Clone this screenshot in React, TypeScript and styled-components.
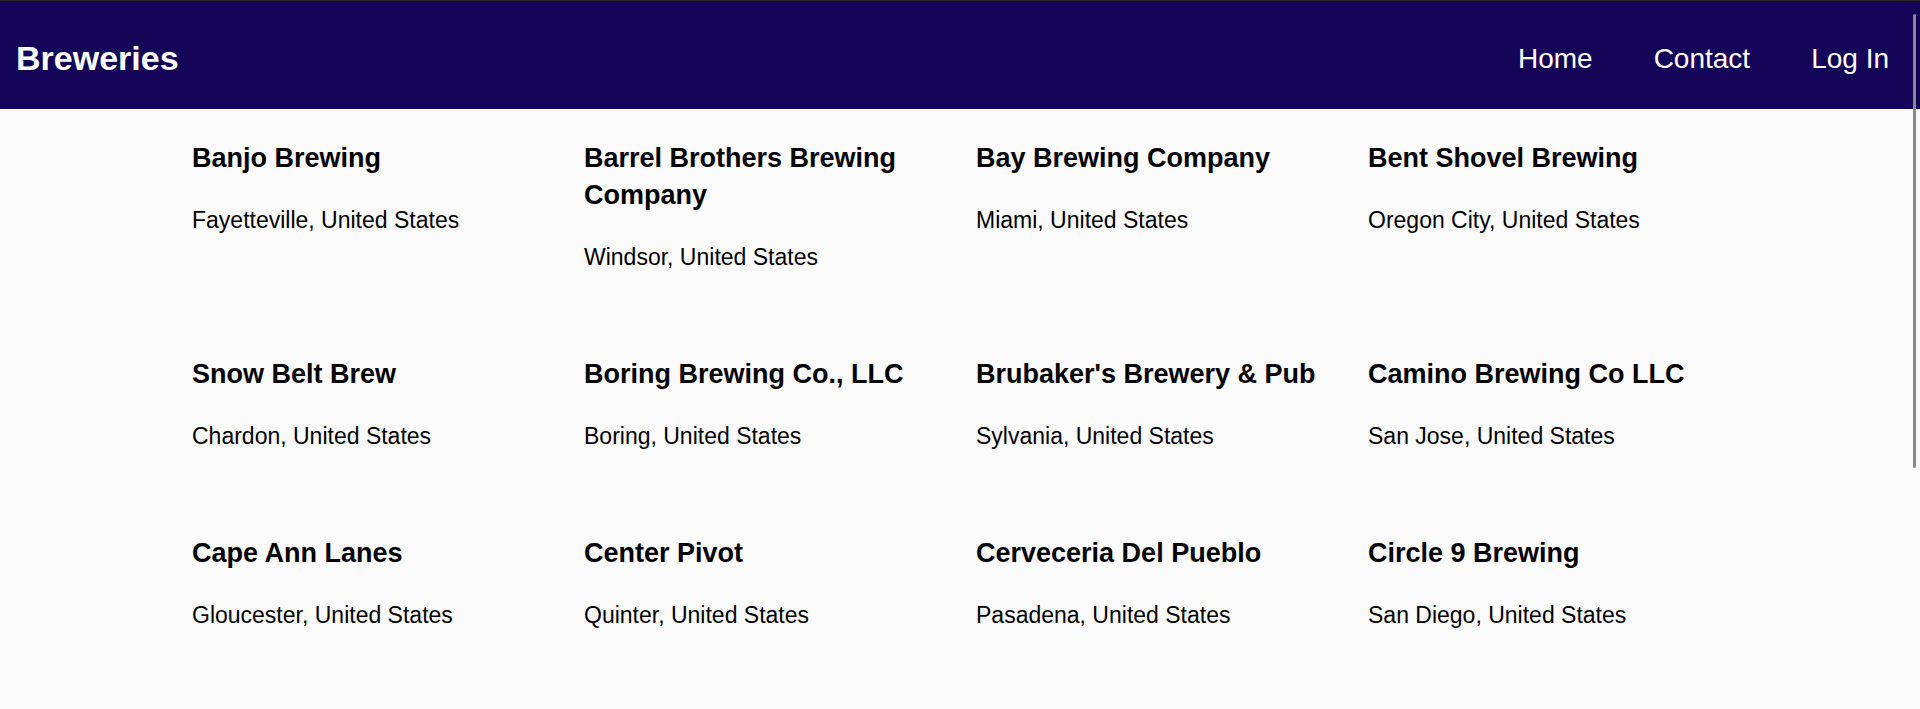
import React from "react";
import styled, { createGlobalStyle } from "styled-components";

const GlobalStyle = createGlobalStyle`
  html, body {
    margin: 0;
    padding: 0;
    background: #fafafa;
    font-family: "Liberation Sans", Arial, sans-serif;
    color: #000;
    overflow: hidden;
  }
  * { box-sizing: border-box; }
`;

const Page = styled.div`
  min-height: 709px;
  border-top: 1px solid #2b2b2b;
  display: flex;
  flex-direction: column;
`;

const Header = styled.header`
  height: 108px;
  background: #140559;
  display: flex;
  align-items: center;
  justify-content: space-between;
  padding: 5px 31px 0 16px;
`;

const Brand = styled.h1`
  margin: 0;
  color: #fff;
  font-size: 34px;
  font-weight: 700;
  line-height: 1;
`;

const Nav = styled.nav`
  display: flex;
  gap: 61px;
  padding-top: 2px;
`;

const NavLink = styled.a`
  color: #fff;
  text-decoration: none;
  font-size: 28px;
  line-height: 1;
`;

const Grid = styled.main`
  display: grid;
  grid-template-columns: repeat(4, 360px);
  column-gap: 32px;
  row-gap: 84px;
  justify-content: center;
  padding-top: 31px;
`;

const Card = styled.article`
  display: flex;
  flex-direction: column;
  gap: 28px;
`;

const Title = styled.h2`
  margin: 0;
  font-size: 27px;
  font-weight: 700;
  line-height: 37px;
`;

const Location = styled.p`
  margin: 0;
  font-size: 23px;
  line-height: 30px;
`;

const ScrollThumb = styled.div`
  position: fixed;
  top: 14px;
  right: 4px;
  width: 3px;
  height: 454px;
  border-radius: 2px;
  background: #8a8a8a;
`;

const breweries = [
  { name: "Banjo Brewing", city: "Fayetteville" },
  { name: "Barrel Brothers Brewing Company", city: "Windsor" },
  { name: "Bay Brewing Company", city: "Miami" },
  { name: "Bent Shovel Brewing", city: "Oregon City" },
  { name: "Snow Belt Brew", city: "Chardon" },
  { name: "Boring Brewing Co., LLC", city: "Boring" },
  { name: "Brubaker's Brewery & Pub", city: "Sylvania" },
  { name: "Camino Brewing Co LLC", city: "San Jose" },
  { name: "Cape Ann Lanes", city: "Gloucester" },
  { name: "Center Pivot", city: "Quinter" },
  { name: "Cerveceria Del Pueblo", city: "Pasadena" },
  { name: "Circle 9 Brewing", city: "San Diego" },
];

export default function App() {
  return (
    <>
      <GlobalStyle />
      <Page>
        <Header>
          <Brand>Breweries</Brand>
          <Nav>
            <NavLink href="#">Home</NavLink>
            <NavLink href="#">Contact</NavLink>
            <NavLink href="#">Log In</NavLink>
          </Nav>
        </Header>
        <Grid>
          {breweries.map((b) => (
            <Card key={b.name}>
              <Title>{b.name}</Title>
              <Location>{b.city}, United States</Location>
            </Card>
          ))}
        </Grid>
      </Page>
      <ScrollThumb />
    </>
  );
}
